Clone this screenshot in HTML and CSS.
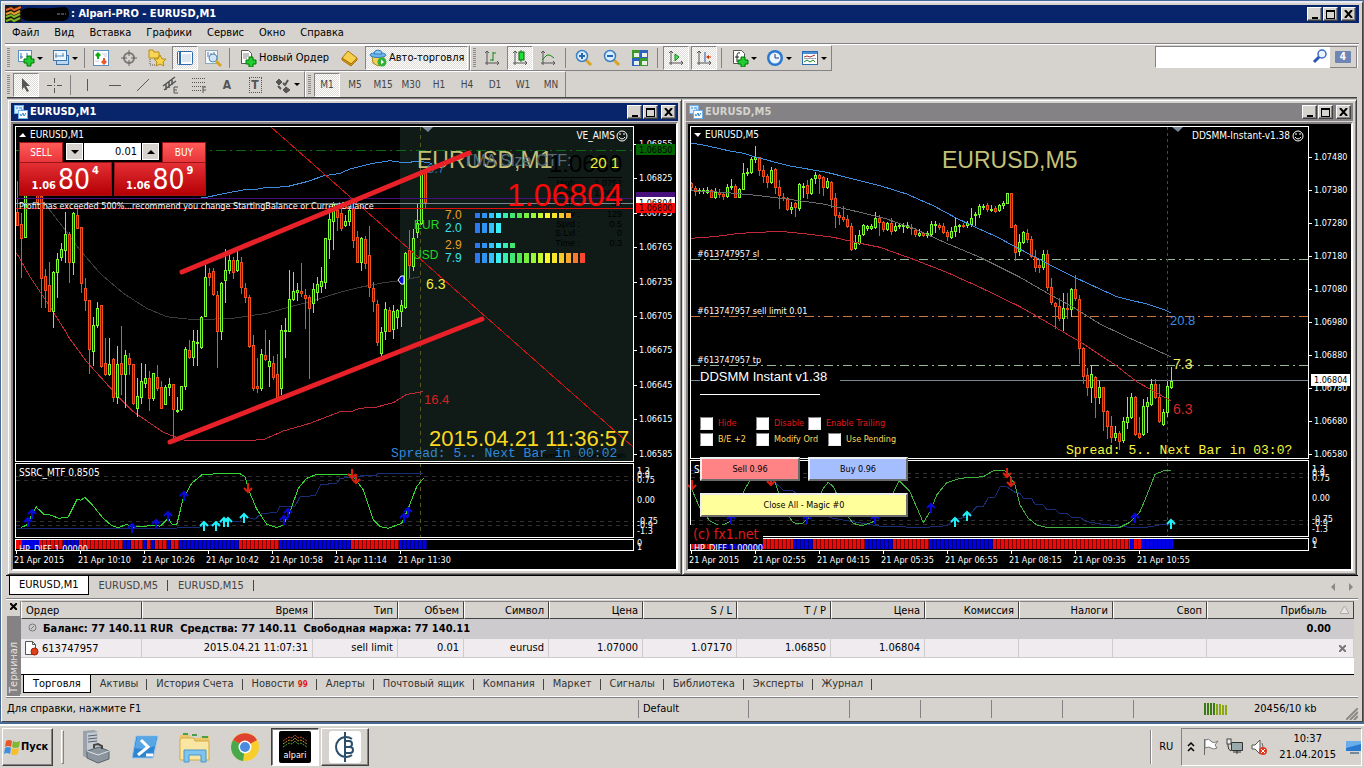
FILE: index.html
```html
<!DOCTYPE html>
<html lang="ru">
<head>
<meta charset="utf-8">
<title>Alpari-PRO - EURUSD,M1</title>
<link rel="stylesheet" href="styles.css">
</head>
<body>
<main class="app">
  <header class="titlebar">
    <svg class="logo" width="65" height="18" viewBox="0 0 65 18"><path d="M1 1h16v16H1z" fill="#201808"/><path d="M16 6q4-4 14-3t30-1q5 2 4 8 0 5-6 6H24q-9 0-8-10z" fill="#000"/><path d="M1 5l5-2 3 2 7-3" stroke="#e8602c" stroke-width="2" fill="none"/><path d="M1 9l5-2 3 2 6-3" stroke="#e8a02c" stroke-width="2" fill="none"/><path d="M1 12l5-2 3 2 6-3M1 16l5-2 3 2 6-3" stroke="#7cb82c" stroke-width="2" fill="none"/><path d="M52 9h9" stroke="#889" stroke-dasharray="3 1"/></svg>
    <h1>: Alpari-PRO - EURUSD,M1</h1>
    <div class="winbtns"><button aria-label="Свернуть"><i class="min"></i></button><button aria-label="Развернуть"><i class="max"></i></button><button class="x" aria-label="Закрыть"><svg width="9" height="8" viewBox="0 0 9 8"><path d="M1 0l7 8M8 0L1 8" stroke="#000" stroke-width="2"/></svg></button></div>
  </header>
  <nav class="menu"><button>Файл</button><button>Вид</button><button>Вставка</button><button>Графики</button><button>Сервис</button><button>Окно</button><button>Справка</button></nav>

  <div class="bars">
    <div class="barstack">
      <div class="row">
        <div class="toolbar one">
          <i class="grip"></i>
          <button class="tb drop" aria-label="Новый график"><svg width="18" height="18" viewBox="0 0 18 18"><rect x="1.500" y="1.500" width="13" height="11" fill="#fff" stroke="#5b8fc4"/><path d="M4 4v6M3 8h3M10 4v4" stroke="#47a"/><path d="M10 7h4v3h3v4h-3v3h-4v-3H7v-4h3z" fill="#2c3" stroke="#070"/></svg></button>
          <button class="tb drop" aria-label="Профили"><svg width="18" height="18" viewBox="0 0 18 18"><rect x="4.500" y="6.500" width="12" height="9" fill="#bcd6f0" stroke="#3b76b0"/><rect x="1.500" y="1.500" width="13" height="10" fill="#eef6ff" stroke="#3b76b0"/><path d="M4 4v5M3 7h9M11 4v3" stroke="#58a"/></svg></button>
          <i class="sep"></i>
          <button class="tb" aria-label="Обзор рынка"><svg width="18" height="18" viewBox="0 0 18 18"><rect x="1.500" y="1.500" width="15" height="15" fill="#fff" stroke="#5b8fc4"/><path d="M3 12h4M10 5h5M12 7h3" stroke="#ccd"/><path d="M6 3l3 3-3 3-3-3z" fill="#1a1"/><path d="M5 6h2v4H5z" fill="#1a1"/><path d="M12 16l3-3-3-3-3 3z" fill="#e52"/><path d="M11 9h2v4h-2z" fill="#e52"/></svg></button>
          <button class="tb" aria-label="Окно данных"><svg width="18" height="18" viewBox="0 0 18 18"><circle cx="9" cy="9" r="5" fill="none" stroke="#777" stroke-width="2"/><path d="M9 1v6M9 11v6M1 9h6M11 9h6" stroke="#666"/></svg></button>
          <button class="tb" aria-label="Навигатор"><svg width="18" height="18" viewBox="0 0 18 18"><path d="M1 3V1h4l1 2h5v6H1z" fill="#f7d657" stroke="#b98a10"/><path d="M2 10v6h5" stroke="#555" fill="none" stroke-dasharray="1 1"/><path d="M12 6l2 4h4l-3 3 1 4-4-2-4 2 1-4-3-3h4z" fill="#fbd54a" stroke="#b98a10"/></svg></button>
          <button class="tb on" aria-label="Терминал"><svg width="18" height="18" viewBox="0 0 18 18"><rect x="1.500" y="2.500" width="15" height="13" rx="1" fill="#fff" stroke="#2d6bb0"/><path d="M4 3v12" stroke="#2d6bb0" stroke-width="2"/><path d="M6 6h9M6 8h9M6 10h9M6 12h9" stroke="#bcd"/></svg></button>
          <button class="tb" aria-label="Тестер стратегий"><svg width="18" height="18" viewBox="0 0 18 18"><rect x="1.500" y="1.500" width="12" height="13" fill="#f4f8ff" stroke="#8ab"/><path d="M4 3v5M7 4v4M10 3v3" stroke="#579"/><circle cx="9" cy="9" r="4" fill="#cfe6fa" stroke="#58a"/><path d="M12 12l5 5" stroke="#d9a520" stroke-width="3"/></svg></button>
          <i class="sep"></i>
          <button class="tb text"><svg width="18" height="18" viewBox="0 0 18 18"><path d="M2.500 1.500h7l3 3v10h-10z" fill="#fff" stroke="#555"/><path d="M4 5h6M4 7h6M4 9h4" stroke="#888"/><path d="M10 8h4v3h3v4h-3v3h-4v-3H7v-4h3z" fill="#2c3" stroke="#070"/></svg>Новый Ордер</button>
          <button class="tb" aria-label="MetaEditor"><svg width="18" height="18" viewBox="0 0 18 18"><path d="M7 2l9 7-6 6-9-6z" fill="#f6cf4c" stroke="#a97408"/><path d="M1 9v2l9 6 6-6V9l-6 6z" fill="#d8961c" stroke="#a97408"/></svg></button>
          <button class="tb text on"><svg width="18" height="18" viewBox="0 0 18 18"><path d="M3 7h12l-1 7-5 3-5-3z" fill="#f1cf58" stroke="#a98414"/><ellipse cx="9" cy="6" rx="8" ry="2.500" fill="#6db5ea" stroke="#337fb8"/><path d="M5 5q0-4 4-4t4 4z" fill="#8ccbf4" stroke="#337fb8"/><circle cx="13" cy="13" r="4.500" fill="#2eb135"/><path d="M12 10.500l3 2.500-3 2.500z" fill="#fff"/></svg>Авто-торговля</button>
        </div>
        <div class="toolbar two">
          <i class="grip"></i>
          <button class="tb" aria-label="Бары"><svg width="18" height="18" viewBox="0 0 18 18"><path d="M4 2v14M2 14h14M2 4l2-2 2 2M14 12l2 2-2 2" stroke="#555" fill="none"/><path d="M10 3v9M10 4h3M7 11h3" stroke="#181" fill="none"/></svg></button>
          <button class="tb on" aria-label="Свечи"><svg width="18" height="18" viewBox="0 0 18 18"><path d="M4 2v14M2 14h14M2 4l2-2 2 2M14 12l2 2-2 2" stroke="#555" fill="none"/><path d="M10 1v12" stroke="#181"/><rect x="8" y="3" width="5" height="8" fill="#2d3" stroke="#060"/></svg></button>
          <button class="tb" aria-label="Линия"><svg width="18" height="18" viewBox="0 0 18 18"><path d="M4 2v14M2 14h14M2 4l2-2 2 2M14 12l2 2-2 2" stroke="#555" fill="none"/><path d="M3 11l5-5q3-1 7 3" stroke="#181" fill="none"/></svg></button>
          <i class="sep"></i>
          <button class="tb" aria-label="Увеличить"><svg width="18" height="18" viewBox="0 0 18 18"><path d="M11 11l5 5" stroke="#d9a520" stroke-width="3"/><circle cx="7" cy="7" r="5.500" fill="#d8edff" stroke="#3c7fc0" stroke-width="1.500"/><path d="M4 7h6M7 4v6" stroke="#2767b0" stroke-width="2"/></svg></button>
          <button class="tb" aria-label="Уменьшить"><svg width="18" height="18" viewBox="0 0 18 18"><path d="M11 11l5 5" stroke="#d9a520" stroke-width="3"/><circle cx="7" cy="7" r="5.500" fill="#d8edff" stroke="#3c7fc0" stroke-width="1.500"/><path d="M4 7h6" stroke="#2767b0" stroke-width="2"/></svg></button>
          <button class="tb" aria-label="Окна рядом"><svg width="18" height="18" viewBox="0 0 18 18"><path d="M1 1h8v8H1zM9 9h8v8H9z" fill="#3c9a2a"/><path d="M9 1h8v8H9zM1 9h8v8H1z" fill="#2d62c0"/><path d="M3 4h5v4H3zM11 4h5v4h-5zM3 12h5v4H3zM11 12h5v4h-5z" fill="#e8f0e8"/></svg></button>
          <i class="sep"></i>
          <button class="tb on" aria-label="Автопрокрутка"><svg width="18" height="18" viewBox="0 0 18 18"><path d="M4 2v14M2 14h14M2 4l2-2 2 2M14 12l2 2-2 2" stroke="#555" fill="none"/><path d="M8 5l4 3-4 4z" fill="#5d6" stroke="#181"/></svg></button>
          <button class="tb on" aria-label="Сдвиг графика"><svg width="18" height="18" viewBox="0 0 18 18"><path d="M4 2v14M2 14h14M2 4l2-2 2 2M14 12l2 2-2 2" stroke="#555" fill="none"/><path d="M10 3v10" stroke="#25a" stroke-width="1"/><path d="M11 8l3-2v4z" fill="#c30"/><path d="M14 8h2" stroke="#c30"/></svg></button>
          <i class="sep"></i>
          <button class="tb drop" aria-label="Индикаторы"><svg width="18" height="18" viewBox="0 0 18 18"><path d="M2.500 1.500h8l3 3v10h-11z" fill="#fff" stroke="#555"/><path d="M9 4q-3-1-3 3v6M4 8h4" stroke="#222" fill="none"/><path d="M10 8h4v3h3v4h-3v3h-4v-3H7v-4h3z" fill="#2c3" stroke="#070"/></svg></button>
          <button class="tb drop" aria-label="Периоды"><svg width="18" height="18" viewBox="0 0 18 18"><circle cx="9" cy="9" r="8" fill="#2a78cf"/><circle cx="9" cy="9" r="5.500" fill="#eaf5ff"/><path d="M9 5v4h4" stroke="#335" fill="none"/></svg></button>
          <button class="tb drop" aria-label="Шаблоны"><svg width="18" height="18" viewBox="0 0 18 18"><rect x="1.500" y="2.500" width="15" height="13" fill="#fff" stroke="#2d6bb0"/><path d="M2 4h14" stroke="#4a8fd6" stroke-width="2"/><path d="M3 8l3-1 3 1 5-2" stroke="#a33" fill="none"/><path d="M3 13l3-2 3 2 3-2 2 2" stroke="#282" fill="none"/><path d="M3 9.500h12" stroke="#9ab"/></svg></button>
        </div>
      </div>
      <div class="row">
        <div class="toolbar one">
          <i class="grip"></i>
          <button class="tb on" aria-label="Курсор"><svg width="18" height="18" viewBox="0 0 18 18"><path d="M5 2l8 8-4 0 3 5-2 1-3-5-2 3z" fill="#555"/></svg></button>
          <button class="tb" aria-label="Перекрестие"><svg width="18" height="18" viewBox="0 0 18 18"><path d="M9.500 2v5M9.500 12v5M2 9.500h5M12 9.500h5M9 9.500h1" stroke="#555"/></svg></button>
          <i class="sep"></i>
          <button class="tb" aria-label="Вертикальная линия"><svg width="18" height="18" viewBox="0 0 18 18"><path d="M9.500 3v12" stroke="#555"/></svg></button>
          <button class="tb" aria-label="Горизонтальная линия"><svg width="18" height="18" viewBox="0 0 18 18"><path d="M3 9.500h12" stroke="#555"/></svg></button>
          <button class="tb" aria-label="Трендовая линия"><svg width="18" height="18" viewBox="0 0 18 18"><path d="M3 15L15 3" stroke="#555"/></svg></button>
          <button class="tb" aria-label="Канал"><svg width="18" height="18" viewBox="0 0 18 18"><path d="M1 10L13 1M2 14L14 5M4 8v6M7 6v6M10 3v6" stroke="#555" stroke-width="1.500"/><path d="M16 11h-4v6h4M12 14h3" stroke="#555" fill="none"/></svg></button>
          <button class="tb" aria-label="Фибоначчи"><svg width="18" height="18" viewBox="0 0 18 18"><path d="M2 2.500h14M2 6.500h14M2 10.500h14M2 14.500h9" stroke="#555" stroke-dasharray="1 1"/><path d="M16 11h-3v6M13 14h3" stroke="#555" fill="none"/></svg></button>
          <button class="tb glyph">A</button>
          <button class="tb glyph boxed"><span>T</span></button>
          <button class="tb drop" aria-label="Стрелки"><svg width="18" height="18" viewBox="0 0 18 18"><path d="M2 6l3-3 3 3-3 3zM9 14l3-3 4 3-4 3z" fill="#555" stroke="#555"/><path d="M4 10l3 3M9 7l2 2 3-5" stroke="#555" stroke-width="2" fill="none"/></svg></button>
        </div>
        <div class="toolbar two periods">
          <i class="grip"></i>
          <button class="tb on">M1</button><button class="tb">M5</button><button class="tb">M15</button><button class="tb">M30</button><button class="tb">H1</button><button class="tb">H4</button><button class="tb">D1</button><button class="tb">W1</button><button class="tb">MN</button>
        </div>
      </div>
    </div>
    <div class="search"><input type="text" aria-label="Поиск"><svg width="16" height="16" viewBox="0 0 16 16"><circle cx="10" cy="5" r="4" fill="#eef5ff" stroke="#3a6cc8" stroke-width="1.500"/><path d="M7 8l-5 5" stroke="#2a55b0" stroke-width="3"/></svg><button><span>4</span></button></div>
  </div>

  <section class="mdi">
    <article class="child">
      <header><svg width="14" height="14" viewBox="0 0 14 14"><rect x=".5" y=".5" width="9" height="8" fill="#d8ecff" stroke="#6fb0ea"/><path d="M2 3h2M5 3h3M7 5h2" stroke="#38c"/><rect x="4.500" y="5.500" width="9" height="8" fill="#fff" stroke="#6fb0ea"/><path d="M6 9l1 2 2-3 1 3 2-3" stroke="#38c" fill="none"/></svg><h2>EURUSD,M1</h2>
      <div class="winbtns"><button aria-label="Свернуть"><i class="min"></i></button><button aria-label="Развернуть"><i class="max"></i></button><button class="x" aria-label="Закрыть"><svg width="9" height="8" viewBox="0 0 9 8"><path d="M1 0l7 8M8 0L1 8" stroke="#000" stroke-width="2"/></svg></button></div></header>
      <div class="canvas">
        <svg id="m1" viewBox="13 124 663 444" preserveAspectRatio="xMinYMin meet"></svg>
        <form class="trade">
          <div class="head"><button type="button" class="red tab">SELL</button>
            <div class="lot"><button type="button" aria-label="Меньше"><i class="dn"></i></button><input type="text" value="0.01" aria-label="Объем"><button type="button" aria-label="Больше"><i class="up"></i></button></div>
            <button type="button" class="red tab">BUY</button></div>
          <div class="quotes"><button type="button" class="red price">1.06<b>80</b><sup>4</sup></button><button type="button" class="red price">1.06<b>80</b><sup>9</sup></button></div>
        </form>
      </div>
    </article>
    <article class="child idle">
      <header><svg width="14" height="14" viewBox="0 0 14 14"><rect x=".5" y=".5" width="9" height="8" fill="#d8ecff" stroke="#6fb0ea"/><path d="M2 3h2M5 3h3M7 5h2" stroke="#38c"/><rect x="4.500" y="5.500" width="9" height="8" fill="#fff" stroke="#6fb0ea"/><path d="M6 9l1 2 2-3 1 3 2-3" stroke="#38c" fill="none"/></svg><h2>EURUSD,M5</h2>
      <div class="winbtns"><button aria-label="Свернуть"><i class="min"></i></button><button aria-label="Развернуть"><i class="max"></i></button><button class="x" aria-label="Закрыть"><svg width="9" height="8" viewBox="0 0 9 8"><path d="M1 0l7 8M8 0L1 8" stroke="#000" stroke-width="2"/></svg></button></div></header>
      <div class="canvas">
        <svg id="m5" viewBox="688 124 663 444" preserveAspectRatio="xMinYMin meet"></svg>
        <form class="ea">
          <h3>DDSMM Instant v1.38</h3>
          <hr>
          <div class="checks r"><label class="w56"><input type="checkbox">Hide</label><label><input type="checkbox">Disable</label><label><input type="checkbox">Enable Trailing</label></div>
          <div class="checks y"><label class="w56"><input type="checkbox">B/E +2</label><label class="w72"><input type="checkbox">Modify Ord</label><label><input type="checkbox">Use Pending</label></div>
          <div class="acts"><button type="button" class="s">Sell 0.96</button><button type="button" class="b">Buy 0.96</button><button type="button" class="c">Close All - Magic #0</button></div>
        </form>
        <a class="copy" href="#">(c) fx1.net</a>
      </div>
    </article>
  </section>

  <nav class="charttabs"><button class="on">EURUSD,M1</button><button>EURUSD,M5</button><button>EURUSD,M15</button><span class="scroll"><svg width="22" height="8" viewBox="0 0 22 8"><path d="M4 0v8L0 4zM18 0v8l4-4z" fill="#8c8a86"/></svg></span></nav>

  <section class="terminal">
    <aside><button aria-label="Закрыть"><svg width="7" height="7" viewBox="0 0 7 7"><path d="M0 0l7 7M7 0L0 7" stroke="#000" stroke-width="2"/></svg></button><span>Терминал</span></aside>
    <div class="pane">
      <table>
        <colgroup><col class="c1"><col class="c2"><col class="c3"><col class="c4"><col class="c3"><col class="c5"><col class="c5"><col class="c5"><col class="c5"><col class="c5"><col class="c5"><col class="c5"><col class="c6"></colgroup>
        <thead><tr><th>Ордер</th><th>Время</th><th>Тип</th><th>Объем</th><th>Символ</th><th>Цена</th><th>S / L</th><th>T / P</th><th>Цена</th><th>Комиссия</th><th>Налоги</th><th>Своп</th><th class="last">Прибыль <svg width="9" height="8" viewBox="0 0 9 8"><path d="M0 7.500L4.500 0 9 7.500z" fill="#e8e6e2" stroke="#aaa"/></svg></th></tr></thead>
        <tbody>
          <tr class="bal"><td colspan="12"><svg width="9" height="9" viewBox="0 0 9 9"><circle cx="4.500" cy="4.500" r="3.500" fill="#ccc" stroke="#777"/><path d="M3 6l3-3" stroke="#777"/></svg>Баланс: 77 140.11 RUR&nbsp; Средства: 77 140.11&nbsp; Свободная маржа: 77 140.11</td><td class="sum">0.00</td></tr>
          <tr class="ord"><td><svg width="15" height="15" viewBox="0 0 15 15"><path d="M1.500.5h7l3 3v10h-10z" fill="#fff" stroke="#555"/><path d="M8.500.5v3h3" stroke="#555" fill="none"/><circle cx="10.500" cy="10.500" r="3.500" fill="#e0401c" stroke="#9a2008"/></svg>613747957</td><td>2015.04.21 11:07:31</td><td>sell limit</td><td>0.01</td><td>eurusd</td><td>1.07000</td><td>1.07170</td><td>1.06850</td><td>1.06804</td><td></td><td></td><td></td><td><svg width="7" height="7" viewBox="0 0 7 7"><path d="M0 0l7 7M7 0L0 7" stroke="#777" stroke-width="2"/></svg></td></tr>
        </tbody>
      </table>
      <nav class="tabs"><button class="on">Торговля</button><button>Активы</button><button>История Счета</button><button>Новости <small>99</small></button><button>Алерты</button><button>Почтовый ящик</button><button>Компания</button><button>Маркет</button><button>Сигналы</button><button>Библиотека</button><button>Эксперты</button><button>Журнал</button></nav>
    </div>
  </section>

  <footer class="status"><span class="help">Для справки, нажмите F1</span><span class="prof">Default</span><span class="s1"></span><span class="s2"></span><span class="s2"></span><span class="s2"></span><span class="s2"></span><span class="s2"></span><span class="net"><svg width="24" height="12" viewBox="0 0 24 12"><path d="M1 0v12M4 0v12M7 0v12M10 0v12" stroke="#3c7a14" stroke-width="2"/><path d="M13 1v11M16 1v11M19 2v10M22 2v10" stroke="#8aa80c" stroke-width="2"/></svg>20456/10 kb</span><svg class="size" width="12" height="12" viewBox="0 0 12 12"><path d="M0 12L12 0M4 12l8-8M8 12l4-4" stroke="#8c8a86" stroke-width="2"/></svg></footer>
</main>

<footer class="taskbar">
  <button class="start"><svg width="18" height="18" viewBox="0 0 18 18"><path d="M3 3q3-2 6 0l-1 6q-3-2-6 0z" fill="#e6562a"/><path d="M10 3q3 2 7 0l-1 6q-4 2-7 0z" fill="#7fb832"/><path d="M2 10q3-2 6 0l-1 6q-3-2-6 0z" fill="#3f8fe0"/><path d="M9 10q3 2 7 0l-1 6q-4 2-7 0z" fill="#f6c02c"/></svg>Пуск</button>
  <i class="handle"></i>
  <div class="quick">
    <button aria-label="Диспетчер серверов"><svg width="34" height="34" viewBox="0 0 34 34"><path d="M5 1l11-1 4 2v22l-11 4-4-2z" fill="#9aa3ab"/><path d="M9 3l11-1v22L9 28z" fill="#c3cad0"/><path d="M10 6l9-1M10 9l9-1M10 12l9-1" stroke="#59636c"/><path d="M9 21l12-4 10 4v8l-11 4-11-5z" fill="#8b959d" stroke="#58626a"/><path d="M9 21l11 4 11-4" stroke="#dfe4e8" fill="none"/><path d="M16 18v-3l4-1 4 2v3" stroke="#444" fill="none" stroke-width="2"/></svg></button>
    <button aria-label="PowerShell"><svg width="34" height="34" viewBox="0 0 34 34"><path d="M8 6h22l-5 22H4z" fill="#2f86d0" stroke="#9cc8ee"/><path d="M9 7h20l-2 9q-10 4-20 2z" fill="#59a6e4"/><path d="M13 10l7 7-10 8M18 25h7" stroke="#fff" stroke-width="3" fill="none"/></svg></button>
    <button aria-label="Проводник"><svg width="34" height="34" viewBox="0 0 34 34"><path d="M2 5h10l1 3h9l1-2h8v24H2z" fill="#e9c767"/><path d="M4 8h12l1 3h14v19H2V9z" fill="#f9e6a2" stroke="#d2a94a"/><path d="M5 3h5v2H5zM14 4h5v2h-5zM24 6h6v2h-6z" fill="#4a9e4a"/><path d="M6 32V20h22v12h-5v-7H11v7z" fill="#7fc4ee" stroke="#4a96cc"/></svg></button>
    <button aria-label="Chrome"><svg width="34" height="34" viewBox="0 0 34 34"><circle cx="17" cy="17" r="14" fill="#f7cf2c"/><path d="M17 17L5 10A14 14 0 0 1 29 10z" fill="#de4332"/><path d="M17 17L5 10a14 14 0 0 0 10 21z" fill="#4aa84c"/><circle cx="17" cy="17" r="6.500" fill="#fff"/><circle cx="17" cy="17" r="5" fill="#4a8be0"/></svg></button>
    <button class="task on" aria-label="alpari"><span class="alpari"><svg width="26" height="14" viewBox="0 0 26 14"><path d="M1 7l6-4 3 1 3-3 3 3 3-1 6 4" stroke="#d8552c" fill="none" stroke-dasharray="2 1"/><path d="M1 10l6-4 3 1 3-3 3 3 3-1 6 4" stroke="#d8a02c" fill="none" stroke-dasharray="2 1"/><path d="M1 13l6-4 3 1 3-3 3 3 3-1 6 4" stroke="#5aa83c" fill="none" stroke-dasharray="2 1"/></svg>alpari</span></button>
    <button class="task" aria-label="CB"><svg width="32" height="32" viewBox="0 0 32 32"><rect width="32" height="32" rx="3" fill="#fff"/><path d="M23 8A10 10 0 1 0 23 24M16 1v30" stroke="#2c4f6c" stroke-width="2" fill="none"/><path d="M16 10h4q3 0 3 3t-3 3h-4 5q3 0 3 3t-3 3h-5" stroke="#2c4f6c" stroke-width="2" fill="none"/></svg></button>
  </div>
  <div class="lang">RU</div>
  <div class="tray">
    <svg width="8" height="10" viewBox="0 0 8 10"><path d="M1 4l3-3 3 3M1 9l3-3 3 3" stroke="#000" stroke-width="1.500" fill="none"/></svg>
    <svg width="17" height="18" viewBox="0 0 17 18"><path d="M2.500 1v16" stroke="#666"/><path d="M3 2q4-2 6 1t7 0l-3 4 2 3q-4 2-6 0t-6 0z" fill="#fff" stroke="#777"/></svg>
    <svg width="18" height="18" viewBox="0 0 18 18"><path d="M5.500 4.500h11v8h-11z" fill="#9aa" stroke="#333"/><path d="M7 14h8M11 12v4M2 3v5q0 4 3 5" stroke="#333" fill="none"/><rect x="1" y="1" width="4" height="5" fill="#eee" stroke="#444"/></svg>
    <svg width="17" height="18" viewBox="0 0 17 18"><path d="M1 7h3l5-5v14l-5-5H1z" fill="#fff" stroke="#555"/><path d="M11 5q2 4 0 8" stroke="#666" fill="none"/><circle cx="12" cy="13" r="4" fill="#e03a22"/><path d="M10 11l4 4M14 11l-4 4" stroke="#fff"/></svg>
    <time>10:37<br>21.04.2015</time>
    <svg width="16" height="18" viewBox="0 0 16 18"><path d="M1 3h15v10H1z" fill="#2a78cf"/><path d="M1 3h15v3L1 10z" fill="#69adea"/><path d="M5 14h9v2H5z" fill="#789"/></svg>
  </div>
</footer>
<script src="charts.js"></script>
</body>
</html>
```
FILE: styles.css
```css
* { box-sizing: border-box; }
:root { --face: #d6d3ce; --dark: #848284; --navy: #08246b; --ui: "DejaVu Sans Condensed", "DejaVu Sans", sans-serif; }
body { margin: 0; height: 100vh; display: flex; flex-direction: column; gap: 2px; background: #4a6a96; font: 11px/14px var(--ui); color: #000; overflow: hidden; }
button, input { font: inherit; color: inherit; border-radius: 0; }
button { background: none; border: 0; padding: 0; margin: 0; }
h1, h2, h3 { margin: 0; font-size: 12px; font-weight: bold; }
svg { display: block; flex: none; }

.app { flex: 1; min-height: 0; margin: 1px 1px 0; padding: 2px 3px 1px; border: 1px solid; border-color: #fff #424142 #424142 #fff; background: var(--face); display: flex; flex-direction: column; border-top-width: 2px; border-top-color: #e8e8f4; }
.titlebar { height: 18px; background: var(--navy); color: #fff; display: flex; align-items: center; gap: 1px; padding-right: 3px; flex: none; }
.titlebar h1 { font-size: 11px; }
.winbtns { display: flex; gap: 1px; margin-left: auto; }
.winbtns button { width: 15px; height: 14px; background: var(--face); border: 1px solid; border-color: #fff #424142 #424142 #fff; box-shadow: inset -1px -1px var(--dark); display: flex; align-items: center; justify-content: center; }
.winbtns .x { margin-left: 2px; }
.min { width: 6px; height: 2px; background: #000; margin-top: 7px; }
.max { width: 9px; height: 9px; border: 1px solid #000; border-top-width: 2px; }
.menu { height: 20px; display: flex; align-items: center; gap: 15px; padding-left: 7px; flex: none; }

.bars { display: flex; align-items: flex-start; border-top: 1px solid var(--dark); box-shadow: inset 0 1px #fff; padding-top: 1px; height: 54px; flex: none; }
.barstack { flex: 1; }
.row { display: flex; height: 26px; }
.toolbar { display: flex; align-items: center; height: 26px; border: 1px solid; border-color: #fff var(--dark) var(--dark) #fff; padding: 0 1px; gap: 2px; }
.toolbar.one { border-left: 0; }
.row:nth-child(2) .toolbar { border-bottom: 0; }
.grip { width: 3px; height: 20px; margin: 0 1px; background: repeating-linear-gradient(#8c8a86 0 1px, transparent 1px 2px); }
.sep { width: 1px; height: 20px; background: var(--dark); margin: 0 3px 0 2px; }
.one .sep { margin: 0 1px; }
.tb { min-width: 26px; height: 24px; display: flex; align-items: center; justify-content: center; gap: 2px; }
.tb.text { padding: 0 6px; }
.tb.text.on { padding: 0 3px; }
.tb.on { border: 1px solid; border-color: var(--dark) #fff #fff var(--dark); background: repeating-conic-gradient(#fff 0 25%, #dedbd6 0 50%) 0 0 / 2px 2px; }
.tb.drop { width: 33px; }
.tb.drop::after { content: ""; border: 3px solid transparent; border-top-color: #000; border-bottom: 0; }
.tb.glyph { font: bold 12px var(--ui); color: #555; }
.boxed span { border: 1px dotted #555; width: 13px; }
.periods .tb { font-size: 10px; color: #444; }
.search { width: 203px; height: 22px; border: 1px solid; border-color: var(--dark) #fff #fff var(--dark); background: #fff; display: flex; align-items: center; margin: 1px 1px 0 0; }
.search input { flex: 1; min-width: 0; border: 0; background: none; height: 20px; outline: 0; }
.search button { width: 27px; height: 21px; margin-left: 2px; background: var(--face); border-right: 1px solid var(--dark); border-bottom: 1px solid var(--dark); display: flex; align-items: center; justify-content: center; }
.search button span { background: #6f86b4; color: #fff; width: 16px; height: 12px; border-radius: 1px; font: bold 10px/12px var(--ui); }

.mdi { flex: 1; min-height: 0; display: grid; grid-template-columns: 1fr 1fr; margin: 0 2px; padding-top: 1px; border-top: 1px solid #424142; background: var(--dark); }
.child { min-width: 0; min-height: 0; display: flex; flex-direction: column; background: var(--face); border: 1px solid; border-color: var(--face) #424142 #424142 var(--face); box-shadow: inset 1px 1px #fff, inset -1px -1px var(--dark); padding: 3px; }
.child header { height: 18px; margin-bottom: 1px; flex: none; background: var(--navy); color: #fff; display: flex; align-items: center; gap: 2px; padding: 0 2px 0 3px; }
.idle header { background: #848284; color: var(--face); }
.child h2 { font-size: 11px; }
.canvas { position: relative; flex: 1; min-height: 0; background: #000; border: 2px solid; border-color: var(--dark) #fff #fff var(--dark); }
.canvas > svg { width: 100%; height: 100%; }

.trade { position: absolute; left: 6px; top: 18px; width: 187px; background: #000; color: #fff; }
.trade .head { display: flex; justify-content: space-between; height: 20px; }
.red { background: linear-gradient(#ff5a58, #e8363a); border: 1px solid #9c1418; }
.trade .tab { width: 44px; font-size: 10px; height: 21px; }
.lot { display: flex; width: 93px; height: 17px; margin-top: 1px; background: #fff; }
.lot button { width: 17px; background: var(--face); border: 1px solid #fff; display: flex; align-items: center; justify-content: center; }
.lot input { flex: 1; min-width: 0; border: 1px solid #000; border-width: 0 1px; padding: 0 4px; text-align: right; color: #000; }
.dn, .up { border: 4px solid transparent; border-top-color: #000; border-bottom: 0; }
.up { border-top: 0; border-bottom: 4px solid #000; }
.quotes { display: grid; grid-template-columns: 1fr 1fr; gap: 2px; }
.price { height: 34px; background: linear-gradient(#e33034, #b40004); display: flex; align-items: flex-end; justify-content: center; font: bold 11px/14px var(--ui); padding-bottom: 2px; gap: 2px; }
.price b { font: 28px/27px var(--ui); }
.price sup { align-self: flex-start; line-height: 15px; font-size: 11px; }

.ea { position: absolute; left: 12px; top: 244px; width: 210px; color: #fff; font-size: 9px; line-height: 12px; }
.ea h3 { font: 13px/18px "Liberation Sans", sans-serif; background: #000; width: 140px; }
.ea hr { width: 120px; border: 0; border-top: 1px solid #fff; margin: 8px 0 20px; }
.checks { display: flex; height: 16px; align-items: center; white-space: nowrap; }
.checks label { display: flex; align-items: center; gap: 5px; width: 52px; }
.checks .w56 { width: 56px; }
.checks .w72 { width: 72px; }
.checks input { appearance: none; width: 13px; height: 13px; margin: 0; flex: none; background: #fff; border: 1px solid; border-color: var(--dark) #eee #eee var(--dark); }
.checks.r { color: #e01818; }
.checks.y { color: #ffd75a; }
.acts { display: grid; grid-template-columns: 1fr 1fr; gap: 12px 8px; width: 208px; margin-top: 10px; color: #000; }
.acts button { height: 24px; border: 2px solid; border-color: #eee #6b6b6b #6b6b6b #eee; }
.s { background: #ff8284; }
.b { background: #a5beff; }
.acts .c { background: #ffff9c; grid-column: span 2; }
.copy { position: absolute; left: 2px; top: 401px; background: #000; color: #e01818; font-size: 14px; line-height: 19px; width: 73px; padding-left: 3px; text-decoration: none; white-space: nowrap; }

.charttabs { height: 24px; flex: none; display: flex; border-top: 1px solid #000; margin: 0 1px; padding-left: 3px; }
.charttabs button { height: 19px; padding: 0 10px; position: relative; color: #444; }
.charttabs .on { background: #fff; border: 1px solid #000; border-top: 0; color: #000; padding: 0 9px; }
.charttabs button:not(.on)::after, .tabs button:not(.on)::after { content: ""; position: absolute; right: 0; top: 4px; height: 11px; border-right: 1px solid #444; }
.scroll { margin: 7px 5px 0 auto; }

.terminal { height: 98px; flex: none; display: flex; border-top: 1px solid #fff; margin: 0 1px; border-bottom: 1px solid #fff; box-shadow: 0 -1px var(--dark); }
.terminal aside { width: 14px; display: flex; flex-direction: column; align-items: center; padding-top: 3px; gap: 6px; }
.terminal aside span { writing-mode: vertical-rl; transform: rotate(180deg); background: var(--dark); color: #e4e2de; flex: 1; width: 13px; line-height: 13px; text-align: left; padding-top: 3px; }
.pane { flex: 1; min-width: 0; margin: 1px 4px 2px 0; display: flex; flex-direction: column; background: #fff; border-left: 1px solid var(--dark); }
table { width: 100%; border-collapse: separate; border-spacing: 0; table-layout: fixed; }
.c1 { width: 121px; } .c2 { width: 171px; } .c3 { width: 85px; } .c4 { width: 66px; } .c5 { width: 94px; } .c6 { width: 147px; }
th, td { padding: 0 4px; text-align: right; font-weight: normal; white-space: nowrap; overflow: hidden; }
th { height: 18px; background: var(--face); border: 1px solid; border-color: #848284 #424142 #424142 #fff; padding-top: 1px; }
th:first-child, td:first-child { text-align: left; }
.last svg { display: inline-block; margin-left: 10px; }
.bal td { height: 20px; background: #cecbce; font-weight: bold; padding-left: 7px; }
.bal svg { display: inline-block; margin-right: 6px; }
.bal .sum { padding-right: 23px; }
.ord td { height: 19px; background: #efebef; border-right: 1px solid #cecbce; border-bottom: 1px solid #cecbce; }
.ord td:first-child { padding-left: 3px; }
.ord svg { display: inline-block; vertical-align: middle; margin-right: 3px; }
.tabs { margin-top: auto; height: 20px; background: var(--face); border-top: 1px solid #000; display: flex; padding-left: 2px; flex: none; }
.tabs button { height: 18px; padding: 0 9px; color: #333; position: relative; white-space: nowrap; }
.tabs .on { background: #fff; color: #000; border: 1px solid #000; border-top: 0; }
.tabs small { color: #e01818; font-weight: bold; font-size: 8px; }

.status { height: 23px; flex: none; display: flex; align-items: center; margin: 0 1px; border-top: 1px solid var(--dark); }
.status span { height: 18px; line-height: 18px; padding-left: 4px; border-left: 1px solid var(--dark); width: 71px; }
.status .help { flex: 1; border: 0; padding-left: 1px; }
.status .prof { width: 110px; }
.status .s1 { width: 101px; }
.status .net { width: 142px; display: flex; align-items: center; gap: 26px; border: 0; padding-left: 0; }
.size { align-self: flex-end; }

.taskbar { height: 44px; flex: none; background: var(--face); border-top: 2px solid #fff; display: flex; align-items: center; padding: 0 2px; }
.start { width: 51px; height: 38px; border: 1px solid; border-color: #fff #424142 #424142 #fff; box-shadow: inset -1px -1px var(--dark); font-weight: bold; display: flex; align-items: center; }
.handle { width: 3px; height: 34px; margin: 0 7px 0 8px; border: 1px solid; border-color: #fff var(--dark) var(--dark) #fff; }
.quick { display: flex; gap: 2px; flex: 1; }
.quick button { width: 48px; height: 38px; display: flex; align-items: center; justify-content: center; }
.quick .task { border: 1px solid; border-color: #fff #424142 #424142 #fff; box-shadow: inset -1px -1px var(--dark); }
.quick .on { border-color: #424142 #fff #fff #424142; background: #fff; box-shadow: inset 1px 1px var(--dark); }
.alpari { background: #000; color: #fff; width: 32px; height: 32px; font-size: 9px; line-height: 11px; border-radius: 2px; display: flex; flex-direction: column; align-items: center; justify-content: center; gap: 2px; }
.lang { border-left: 1px solid var(--dark); box-shadow: inset 1px 0 #fff; padding: 10px 8px; height: 34px; line-height: 14px; }
.tray { display: flex; align-items: center; gap: 7px; border: 1px solid; border-color: var(--dark) #fff #fff var(--dark); height: 38px; padding-left: 5px; }
.tray time { text-align: center; line-height: 16px; padding: 0 2px 0 4px; }

.ax { font: 9px var(--ui); fill: #fff; }
.lbl { font: 10px var(--ui); fill: #fff; }
.big { font-family: "Liberation Sans", sans-serif; }
.mono { font: 13px "Liberation Mono", monospace; }
.crisp { shape-rendering: crispEdges; }
```
FILE: charts.js
```js
const NS = 'http://www.w3.org/2000/svg';

function add(svg, tag, attrs, text) {
  const e = document.createElementNS(NS, tag);
  for (const k in attrs) e.setAttribute(k, attrs[k]);
  if (text !== undefined) e.textContent = text;
  svg.appendChild(e);
  return e;
}
const rect = (s, x, y, w, h, fill) => add(s, 'rect', { x, y, width: w, height: h, fill, class: 'crisp' });
const line = (s, x1, y1, x2, y2, stroke, dash) => add(s, 'path', { d: `M${x1} ${y1}L${x2} ${y2}`, stroke, fill: 'none', class: 'crisp', ...(dash ? { 'stroke-dasharray': dash } : {}) });
const text = (s, x, y, str, cls, extra = {}) => add(s, 'text', { x, y, class: cls, ...extra }, str);

// Curves are stored in thirds of a pixel, relative to the origin of their block.
function curve(s, color, blocks) {
  const pts = [];
  for (const [ox, oy, data] of blocks)
    for (const p of data.split(' ')) {
      const [x, y] = p.split(',').map(Number);
      pts.push(`${(ox + x / 3).toFixed(1)} ${(oy + y / 3).toFixed(1)}`);
    }
  add(s, 'path', { d: 'M' + pts.join('L'), stroke: color, fill: 'none', class: 'crisp' });
}

// Each candle: direction, high, body top, body bottom, low.
function candles(s, x0, oy, unit, data) {
  data.trim().split(/\s+/).forEach((c, i) => {
    if (c === '-') return;
    const up = c[0] === 'g';
    const [h, t, b, l] = c.slice(1).split(',').map(v => Math.round(oy + v * unit));
    const col = up ? '#7cfc2c' : '#f0501c';
    const x = x0 + i * 4;
    rect(s, x, h, 1, Math.max(1, l - h + 1), col);
    rect(s, x - 1, t, 3, Math.max(1, b - t + 1), col);
    if (b - t > 1) rect(s, x, t + 1, 1, b - t - 1, up ? '#003c00' : '#a00800');
  });
}

function arrow(s, x, y, color, down) {
  const k = down ? -1 : 1;
  add(s, 'path', { d: `M${x} ${y + 5 * k}V${y - 4 * k}M${x - 4} ${y}L${x} ${y - 4 * k}L${x + 4} ${y}`, stroke: color, 'stroke-width': 2, fill: 'none' });
}
function arrows(s, ox, oy, list) {
  const colors = { b: '#0808d8', c: '#20f0f8', r: '#d82010' };
  for (const a of list.split(' ')) {
    const [x, y] = a.slice(1).split(',').map(Number);
    arrow(s, Math.round(ox + x / 3), Math.round(oy + y / 3), colors[a[0]], a[0] === 'r');
  }
}
function strip(s, y, h, segs) {
  let color = 0;
  for (let i = 0; i < segs.length - 1; i++) {
    rect(s, segs[i], y, segs[i + 1] - segs[i], h, color ? '#000078' : '#780404');
    for (let x = segs[i]; x < segs[i + 1]; x += 4)
      rect(s, x, y, Math.min(3, segs[i + 1] - x), h, color ? '#0000e8' : '#f00808');
    color ^= 1;
  }
}
function frame(s, x, y, w, h) {
  add(s, 'rect', { x: x + 0.5, y: y + 0.5, width: w, height: h, fill: 'none', stroke: '#fff', class: 'crisp' });
}
function smiley(s, x, y) {
  add(s, 'circle', { cx: x, cy: y, r: 5, fill: 'none', stroke: '#fff' });
  add(s, 'path', { d: `M${x - 3} ${y + 1}q3 4 6 0M${x - 2} ${y - 3}v2M${x + 2} ${y - 3}v2`, stroke: '#fff', fill: 'none' });
}
function axis(s, x, first, step, y0, gap, n) {
  for (let i = 0; i < n; i++) {
    const y = Math.round(y0 + gap * i);
    line(s, x, y + 0.5, x + 3, y + 0.5, '#fff');
    text(s, x + 5, y + 3, (first - step * i).toFixed(5), 'ax');
  }
}
function levels(s, x, dy) {
  [['1.3', 474], ['0.9', 478], ['0.75', 483], ['0.00', 503], ['-0.75', 524], ['-0.9', 528], ['-1.3', 534], ['0', 546], ['1', 550]]
    .forEach(([t, y]) => text(s, x, y + dy, t, 'ax'));
}
function times(s, x0, list) {
  list.forEach((t, i) => {
    text(s, x0 + 64 * i, 563, '21 Apr ' + t, 'ax');
    line(s, x0 + 2.5 + 64 * i, 550, x0 + 2.5 + 64 * i, 554, '#fff');
  });
}

/* EURUSD,M1 */
(() => {
  const s = document.getElementById('m1');
  rect(s, 400, 127, 233, 334, '#101b18');
  line(s, 16, 150.5, 633, 150.5, '#0c6a10', '10 4 2 4');
  line(s, 420.5, 127, 420.5, 537, '#5a5a1c', '4 4');
  curve(s, '#3c3c3c', [[0, 100, '130,305 180,370 240,450 300,520 370,580 440,625 500,650 560,657 620,658 700,655 800,640 880,618 940,602 1020,577'], [340, 100, '60,562 130,548 180,542 240,530']]);
  curve(s, '#3c8ce0', [[0, 100, '572,296 595,295 620,292 665,282 730,270 770,268 795,263 860,260 920,245 970,228 1020,220'], [340, 100, '30,207 100,190 150,182 190,188 240,184 275,190']]);
  curve(s, '#c02838', [[0, 100, '50,460 90,530 140,605 200,700'], [0, 335, '205,5 260,80 350,180 400,230 490,292 550,315 650,317 740,318 795,312 850,288 930,265 1020,230'], [340, 335, '30,231 60,220 110,216 160,203 200,178 250,170']]);
  candles(s, 17, 0, 1, `r181,212,225,225 r213,224,238,277 g180,180,237,237 - - r190,190,202,204 r196,196,278,307 r269,276,290,307 r262,285,311,311 g271,272,311,327
    g253,259,272,297 g243,249,257,260 g212,234,250,262 r232,234,262,282 g212,213,262,274 r206,215,228,228 r227,227,283,292 r278,288,300,310 r300,300,349,373 g317,325,351,365
    g302,308,325,327 r305,305,366,367 r338,363,374,375 g338,364,374,375 r358,359,397,401 g346,364,397,403 r326,363,374,394 g350,355,374,407 r353,358,364,374 r364,364,403,404
    g378,396,408,416 g363,381,397,403 g364,378,383,387 r371,378,398,410 g373,373,398,400 r365,377,388,390 r381,387,408,408 g385,387,404,404 g378,384,387,395 r384,384,409,441
    g397,410,411,412 g386,386,409,410 g347,349,386,389 r340,350,357,358 g330,341,357,365 g330,342,343,365 g316,317,347,348 g265,277,316,316 r268,273,277,285 r268,271,294,295
    r291,295,331,367 g282,283,331,339 g249,270,280,302 g255,260,270,273 r257,260,272,278 g251,260,270,271 r257,262,287,293 r283,288,297,302 r295,297,346,347 r335,345,388,390
    r358,386,388,392 g349,354,388,390 r330,355,359,360 g340,361,366,386 r356,363,377,379 r354,374,397,397 g325,330,388,394 g318,330,331,357 g270,299,331,331 g272,291,299,300
    g283,290,292,300 r263,291,293,296 r289,295,298,328 r295,297,308,378 g283,289,303,312 g277,284,292,300 g267,281,286,292 g238,238,282,288 g208,219,239,258 g202,204,221,249
    r203,210,217,230 r205,213,228,230 g215,221,225,226 g207,210,221,225 r203,208,240,247 r231,237,262,262 g237,238,262,270 r236,239,263,268 r226,255,287,296 r282,288,301,311
    r300,304,342,345 g327,332,353,356 g302,309,331,339 r307,310,331,331 g305,311,329,338 g309,310,317,328 g300,305,311,326 g252,253,307,308 r230,250,265,277 g229,238,266,270
    g203,223,232,237 g170,172,223,224 r170,172,202,208`);
  line(s, 16, 198.5, 636, 198.5, '#48107c');
  line(s, 16, 203.5, 636, 203.5, '#788890');
  line(s, 16, 208.5, 636, 208.5, '#e01010');
  line(s, 271, 127, 633, 447, '#c81414');

  text(s, 417, 168, 'EURUSD,M1', 'big', { 'font-size': 23, fill: '#c4c078' });
  text(s, 463, 166, 'TMA Size CTF:', 'big', { 'font-size': 16, fill: '#5c6c7c' });
  text(s, 549, 172, '1.0680', 'big', { 'font-size': 24, fill: '#000' });
  line(s, 548, 177.5, 622, 177.5, '#000');
  text(s, 590, 168, '20 1', 'big', { 'font-size': 15, fill: '#f0f030' });
  [['High :', '1.0752', 186], ['Low :', '1.0660', 196], ['ATR :', '34', 206], ['Av :', '129', 217], ['Sprd :', '0.5', 227], ['S.Lvl :', '0', 236], ['Time :', '0:3', 246]].forEach(([a, b, y]) => {
    text(s, 580, y, a, 'big', { 'font-size': 9, fill: '#000', 'text-anchor': 'end' });
    text(s, 622, y, b, 'big', { 'font-size': 9, fill: '#000', 'text-anchor': 'end' });
  });
  text(s, 507, 206, '1.06804', 'big', { 'font-size': 32, fill: '#f80808' });
  text(s, 427, 173, '8.7', 'big', { 'font-size': 13, fill: '#2c70b0' });
  const ramp = ['#2c78f0', '#3094f4', '#34c0f8', '#38f0f8', '#34f0b0', '#40e870', '#50e850', '#78f040', '#98f838', '#c8f830', '#f8f82c', '#f8e428', '#f8c828', '#f8a828', '#f87830', '#f84830'];
  [[213, 5, 14], [223, 10, 4], [243, 5, 6], [253, 10, 16]].forEach(([y, h, n]) => {
    for (let i = 0; i < n; i++) rect(s, 475 + 7 * i, y, 5, h, ramp[i]);
  });
  text(s, 414, 229, 'EUR', 'big', { 'font-size': 12, fill: '#20d820' });
  text(s, 413, 259, 'USD', 'big', { 'font-size': 12, fill: '#20d820' });
  [['7.0', 219, '#e8a028'], ['2.0', 232, '#38e0f0'], ['2.9', 249, '#e8a028'], ['7.9', 262, '#38e0f0']].forEach(([t, y, f]) => text(s, 445, y, t, 'big', { 'font-size': 12, fill: f }));
  text(s, 426, 289, '6.3', 'big', { 'font-size': 14, fill: '#f0f030' });
  text(s, 424, 404, '16.4', 'big', { 'font-size': 13, fill: '#d82020' });
  text(s, 537, 458, 'Bismillah – Alhamdulillah', 'big', { 'font-size': 8, fill: '#000' });
  text(s, 391, 457, 'Spread: 5.. Next Bar in 00:02', 'mono', { fill: '#3088d8' });
  text(s, 429, 446, '2015.04.21 11:36:57', 'big', { 'font-size': 22, fill: '#f8d820' });
  text(s, 19, 209, 'Profit has exceeded 500%...recommend you change StartingBalance or CurrentBalance', 'ax');
  add(s, 'path', { d: 'M182 272L469 153M170 442L482 319', stroke: '#e82028', 'stroke-width': 5, 'stroke-linecap': 'round' });
  add(s, 'path', { d: 'M398 280l3-4h3v8h-3z', fill: '#0808d8', stroke: '#fff' });
  add(s, 'path', { d: 'M422 127h11l-5 5z', fill: '#788898' });
  add(s, 'path', { d: 'M19 137h7l-3-4z', fill: '#fff' });
  text(s, 30, 138, 'EURUSD,M1', 'lbl');
  text(s, 615, 139, 'VE_AIMS', 'lbl', { 'text-anchor': 'end' });
  smiley(s, 622, 136);

  [476.5, 480.5, 521.5, 525.5].forEach(y => line(s, 16, y, 633, y, '#303030', '4 4'));
  curve(s, '#182c78', [[0, 335, '50,580 530,580 535,576 600,576 680,560 720,558 735,545 765,553 785,535 830,533 840,514 885,514 900,485 945,482 962,448 1010,446 1020,430'], [340, 335, '60,425 65,420 110,420 115,415 250,415']]);
  curve(s, '#34d834', [[0, 335, '62,578 80,570 108,515 130,537 155,541 175,550 205,546 232,492 242,496 254,487 275,508 310,550 335,572 355,578 380,568 398,577 440,573 470,570 480,574 505,550 515,567 530,569 550,490 575,445 605,420 650,416 720,416 735,425 748,470 770,522 800,568 830,578 850,570 870,530 895,460 920,430 950,418 1020,418'], [340, 335, '30,418 45,432 70,465 100,555 120,575 145,580 185,565 205,520 230,455 250,430']]);
  arrows(s, 0, 335, 'b84,560 b96,537 b396,578 b468,567 b504,542 b552,482 b852,555 b864,535 c612,573 c648,573 c672,560 c684,560 c732,548 r744,460');
  arrows(s, 340, 335, 'r36,418 r48,432 b192,550 b205,530');
  text(s, 19, 476, 'SSRC_MTF 0.8505', 'lbl');
  strip(s, 540, 9, [16, 22, 39, 63, 79, 123, 131, 143, 147, 151, 155, 167, 171, 179, 239, 279, 351, 399, 427]);
  text(s, 19, 552, 'HP_DIFF 1.00000', 'ax');
  rect(s, 13, 551, 663, 17, '#000');

  frame(s, 15, 126, 618, 335);
  frame(s, 15, 463, 618, 74);
  frame(s, 15, 539, 618, 11);
  rect(s, 634, 124, 42, 444, '#000');
  axis(s, 634, 1.06855, 0.0003, 144, 34.4, 10);
  rect(s, 636, 192, 39, 6, '#48107c');
  rect(s, 636, 197, 39, 8, '#fff');
  rect(s, 636, 144, 39, 11, '#006400');
  text(s, 639, 153, '1.06850', 'ax', { style: 'fill:#000' });
  text(s, 639, 206, '1.06804', 'ax', { style: 'fill:#000' });
  rect(s, 636, 203, 39, 10, '#f80808');
  text(s, 639, 211, '1.06800', 'ax', { style: 'fill:#000' });
  levels(s, 637, 0);
  times(s, 14, ['2015', '10:10', '10:26', '10:42', '10:58', '11:14', '11:30']);
})();

/* EURUSD,M5 */
(() => {
  const s = document.getElementById('m5');
  line(s, 691, 259.5, 1308, 259.5, '#98b898', '9 4 2 4');
  line(s, 691, 316.5, 1308, 316.5, '#c87840', '9 4 2 4');
  line(s, 691, 365.5, 1308, 365.5, '#98b898', '9 4 2 4');
  line(s, 691, 380.5, 1311, 380.5, '#788890');
  line(s, 1167.5, 127, 1167.5, 536, '#4a4a2c', '3 3');
  candles(s, 691, 100, 1 / 3, `r245,250,262,270 r258,265,272,285 g265,270,273,278 g265,271,274,280 g262,270,275,278 r268,270,290,290 g265,275,290,293 r268,277,283,290 r275,282,287,297 g253,262,288,292
    g237,257,262,266 r253,257,290,292 g265,267,290,292 g190,220,268,268 g205,215,220,225 g172,178,216,218 g138,170,178,185 r170,172,210,225 r195,210,227,245 r222,228,247,262
    g200,210,247,250 r203,207,260,278 r240,260,285,325 r280,290,295,300 r290,295,328,330 g305,320,328,340 r305,308,320,347 g250,253,325,330 g250,258,262,290 r240,255,280,295
    g235,238,278,282 g215,225,235,250 r222,226,235,278 r228,230,260,285 g235,242,260,265 r242,245,298,320 r280,295,345,380 r335,345,352,372 r318,350,358,362 r345,358,378,382
    r370,378,448,450 g405,430,445,448 g390,405,428,432 g372,375,402,405 g375,377,385,390 g373,377,385,388 g337,353,382,385 r345,353,365,405 r362,366,387,392 g365,368,388,390
    r355,368,392,402 g368,378,390,392 g368,375,378,385 g368,375,378,395 g365,375,380,385 r372,380,385,403 r383,390,403,407 g388,400,405,408 r395,398,406,408 g393,400,406,412
    g362,373,402,405 g362,373,376,395 r370,375,380,388 r368,378,395,400 r390,395,408,420 g380,392,412,415 g352,377,393,408 g373,376,378,395 r370,375,378,382 g362,368,375,380
    g325,353,373,378 g335,342,345,375 g312,318,342,350 g312,317,320,328 r310,315,328,332 g315,328,330,332 r318,325,332,335 g312,315,330,333 g303,308,316,325 g278,280,308,310
    r278,280,380,382 r372,375,455,480 g402,425,452,465 g393,397,425,430 r387,400,418,425 r408,417,467,470 r450,470,500,513 r480,495,500,515 g450,463,500,507 r450,463,560,570
    r535,560,607,612 r605,610,618,683 r595,618,655,660 g580,625,653,690 r580,625,628,655 g563,567,628,647 r525,567,595,600 r585,597,745,788`);
  candles(s, 1083, 335, 1 / 3, `r35,40,122,143 r100,120,157,180 g90,118,155,200 r122,125,185,245 g138,157,185,205 r155,157,227,285 r225,227,273,310 r243,273,305,320 g273,293,305,315 r288,293,318,342
    g245,258,315,320 g187,247,262,278 g173,185,247,250 r183,185,298,300 r245,293,305,308 g192,213,297,300 g187,200,213,290 g132,147,207,210 r132,148,187,190 r147,187,257,260
    g222,230,267,270 g137,153,230,242 g95,137,155,158`);
  curve(s, '#3c8ce0', [[680, 100, '34,130 60,133 150,153 190,160 240,175 330,198 440,217 520,237 600,257 680,282 760,317 830,355 900,388 950,410 1005,440'], [1020, 100, '0,448 50,473 90,495 170,535 290,590 380,612 430,628 452,638']]);
  curve(s, '#6c6c6c', [[680, 100, '34,272 130,277 220,285 320,297 430,312 520,332 620,357 700,385 800,430 900,472'], [1020, 100, '0,532 80,578 160,622 240,672 330,715'], [1020, 335, '370,28 452,65']]);
  curve(s, '#c02838', [[680, 100, '34,415 100,410 180,400 300,394 380,402 460,412 540,430 600,442 700,478 800,517 900,562'], [1020, 100, '0,620 90,672 145,705'], [1020, 335, '180,20 290,93 350,140 452,197']]);

  text(s, 942, 168, 'EURUSD,M5', 'big', { 'font-size': 23, fill: '#c4c078' });
  text(s, 1170, 325, '20.8', 'big', { 'font-size': 13, fill: '#3c8ce0' });
  text(s, 1173, 369, '7.3', 'big', { 'font-size': 14, fill: '#f0f060' });
  text(s, 1173, 414, '6.3', 'big', { 'font-size': 14, fill: '#d82828' });
  text(s, 697, 257, '#613747957 sl', 'ax');
  text(s, 697, 314, '#613747957 sell limit 0.01', 'ax');
  text(s, 697, 363, '#613747957 tp', 'ax');
  text(s, 1066, 454, "Spread: 5.. Next Bar in 03:0?", 'mono', { fill: '#f8f840' });
  add(s, 'path', { d: 'M1172 127h11l-5 5z', fill: '#788898' });
  add(s, 'path', { d: 'M694 133h7l-3 4z', fill: '#fff' });
  text(s, 705, 138, 'EURUSD,M5', 'lbl');
  text(s, 1290, 139, 'DDSMM-Instant-v1.38', 'lbl', { 'text-anchor': 'end' });
  smiley(s, 1298, 136);

  [473.5, 477.5, 520.5, 524.5].forEach(y => line(s, 691, y, 1308, y, '#303030', '4 4'));
  curve(s, '#182c78', [[680, 335, '34,407 60,407 270,430 310,465 340,468 400,520 450,548 520,560 610,575 740,577 800,572 830,550 860,548 890,515 910,515 925,487 945,487 960,455 980,455 1005,472'], [1020, 335, '0,475 10,490 35,490 45,508 68,508 80,523 105,523 118,535 140,535 155,547 180,547 200,560 250,568 330,577 380,577 430,568 452,568']]);
  curve(s, '#40b040', [[680, 335, '34,460 60,520 90,558 120,573 150,560 180,490 210,435 260,425 285,440 310,520 340,563 365,567 395,540 430,460 445,442 460,455 500,540 520,565 545,573 580,560 620,510 658,437 690,470 730,563 750,530 770,480 800,443 840,430 910,425 940,407 970,405 985,415 1005,450'], [1020, 335, '0,510 25,550 50,570 80,577 300,577 330,562 360,530 385,470 405,418 430,408 452,405']]);
  arrows(s, 680, 335, 'r36,450 r274,437 r981,415 r993,442 b152,553 b380,553 b584,553 b752,520 c824,560 c860,543');
  arrows(s, 1020, 335, 'b345,550 c452,567');
  text(s, 694, 473, 'SSRC_MTF', 'lbl');
  strip(s, 539, 10, [691, 713, 763, 793, 813, 865, 893, 929, 993, 1130, 1134, 1142, 1173].map((v, i) => v));
  text(s, 694, 551, 'HP_DIFF 1.00000', 'ax');
  rect(s, 688, 551, 663, 17, '#000');

  frame(s, 690, 126, 618, 332);
  frame(s, 690, 460, 618, 76);
  frame(s, 690, 538, 618, 12);
  rect(s, 1309, 124, 42, 444, '#000');
  axis(s, 1309, 1.0748, 0.001, 157, 33, 10);
  rect(s, 1311, 374, 39, 12, '#fff');
  text(s, 1314, 383, '1.06804', 'ax', { style: 'fill:#000' });
  levels(s, 1312, -2);
  times(s, 689, ['2015', '02:55', '04:15', '05:35', '06:55', '08:15', '09:35', '10:55']);
})();
```
